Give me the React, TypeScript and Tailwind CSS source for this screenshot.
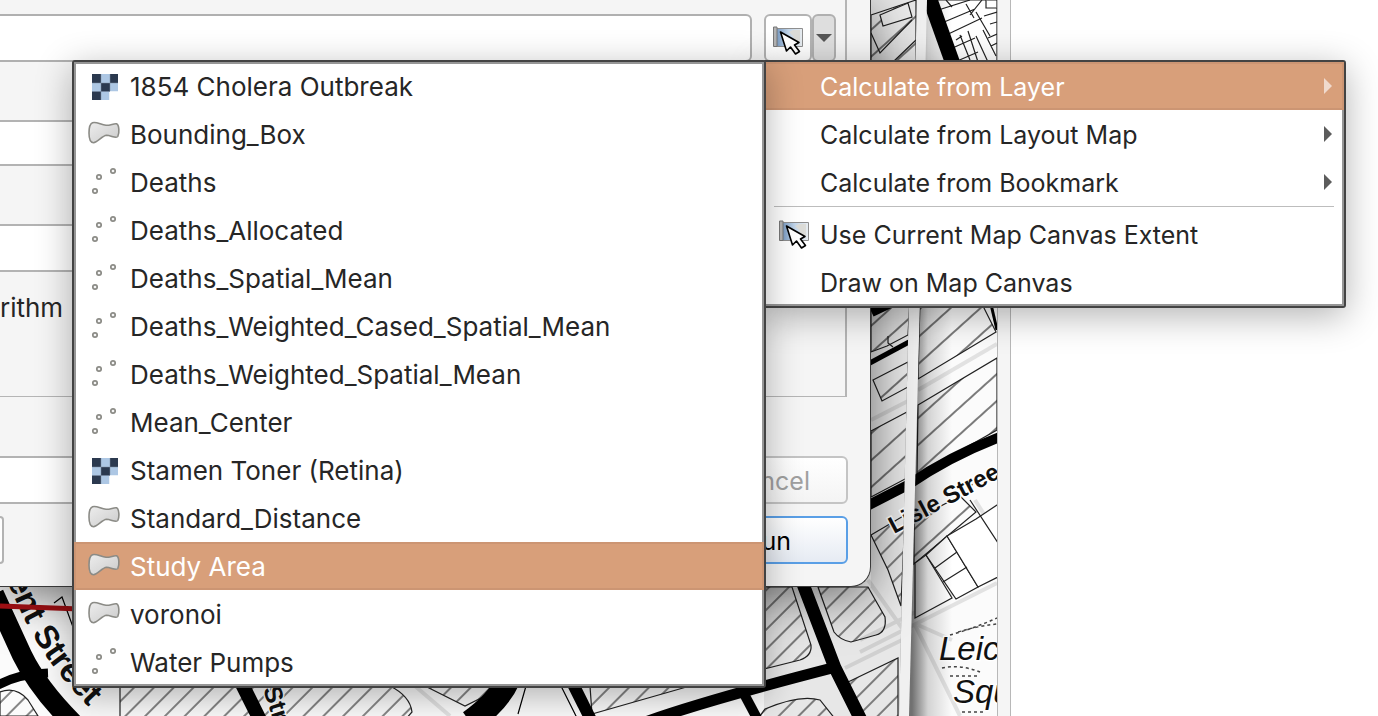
import React from "react";

type LayerKind = "raster" | "polygon" | "point";

const layers: { name: string; kind: LayerKind; active?: boolean }[] = [
  { name: "1854 Cholera Outbreak", kind: "raster" },
  { name: "Bounding_Box", kind: "polygon" },
  { name: "Deaths", kind: "point" },
  { name: "Deaths_Allocated", kind: "point" },
  { name: "Deaths_Spatial_Mean", kind: "point" },
  { name: "Deaths_Weighted_Cased_Spatial_Mean", kind: "point" },
  { name: "Deaths_Weighted_Spatial_Mean", kind: "point" },
  { name: "Mean_Center", kind: "point" },
  { name: "Stamen Toner (Retina)", kind: "raster" },
  { name: "Standard_Distance", kind: "polygon" },
  { name: "Study Area", kind: "polygon", active: true },
  { name: "voronoi", kind: "polygon" },
  { name: "Water Pumps", kind: "point" },
];

function LayerIcon({ kind }: { kind: LayerKind }) {
  if (kind === "raster") {
    return (
      <svg viewBox="0 0 32 32" className="size-8 shrink-0" aria-hidden="true">
        <path d="M4 4h26v17.5h-8.5V30H4z" fill="#adc7e4" />
        <path d="M21.5 21.5H30V30h-8.5z" fill="#fff" />
        <path d="M4 4h9v9H4zM22 4h8v9h-8zM13 13h9v8.500h-9zM4 21.500h9V30H4z" fill="#2b394f" />
        <path d="M4 13h26M4 21.500h18M13 4v26M22 4v17" stroke="#7d8da3" strokeWidth=".5" />
      </svg>
    );
  }
  if (kind === "polygon") {
    return (
      <svg viewBox="0 0 32 32" className="size-8 shrink-0" aria-hidden="true">
        <defs>
          <linearGradient id="shape" x1="0" y1="0" x2="1" y2="1">
            <stop offset="0" stopColor="#ededed" />
            <stop offset="1" stopColor="#cbcbcb" />
          </linearGradient>
        </defs>
        <path
          d="M4.500 4.700C8.500 3.500 12.500 6.500 18 7.300C22.500 7.500 25.500 5.300 28.500 5.800C31.300 7 31.500 15 29.800 18.500C28.500 21 23 17.500 18.500 17.300C14 17.800 9.500 24.500 5.500 24.700C1.500 24.500 1 20 1 15C1 10 1.500 5.800 4.500 4.700Z"
          fill="url(#shape)"
          stroke="#8b8b86"
          strokeWidth="1.600"
        />
      </svg>
    );
  }
  return (
    <svg viewBox="0 0 32 32" className="size-8 shrink-0" fill="#f4f4f4" stroke="#8b8b86" strokeWidth="1.700" aria-hidden="true">
      <circle cx="7" cy="25" r="2.200" />
      <circle cx="11" cy="11" r="2.200" />
      <circle cx="25" cy="5" r="2.200" />
    </svg>
  );
}

function ExtentIcon() {
  return (
    <svg viewBox="0 0 32 32" className="size-8 shrink-0" aria-hidden="true">
      <defs>
        <linearGradient id="sheet" x1="0" y1="0" x2="1" y2="0">
          <stop offset="0" stopColor="#6f93bd" />
          <stop offset=".5" stopColor="#c3d6ea" />
          <stop offset="1" stopColor="#e9edf0" />
        </linearGradient>
      </defs>
      <path d="M3 4.500H30.500V22.500H3z" fill="url(#sheet)" stroke="#8e8e8e" />
      <path d="M17 8l4-2h7v12l-5-1-2-5z" fill="#dcdcd8" />
      <path d="M1.500 3h3.500v19.500H1.500z" fill="#b5b5b5" stroke="#777" />
      <path
        d="M8.500 8L14.500 27L18.500 23L23.500 30L27.500 27.500L22.500 21L27 18.500Z"
        fill="#fff"
        stroke="#000"
        strokeWidth="1.600"
        strokeLinejoin="round"
      />
    </svg>
  );
}

function Arrow() {
  return (
    <svg viewBox="0 0 8 16" className="h-4 w-2 shrink-0 fill-current" aria-hidden="true">
      <path d="M0 0L8 8L0 16Z" />
    </svg>
  );
}

function CommandItem({
  label,
  icon,
  arrow,
  active,
}: {
  label: string;
  icon?: React.ReactNode;
  arrow?: boolean;
  active?: boolean;
}) {
  return (
    <li role="none">
      <button
        type="button"
        role="menuitem"
        aria-haspopup={arrow ? "menu" : undefined}
        className={
          active
            ? "flex h-12 w-full items-center gap-2.5 bg-[#d89f7a] pl-[14px] pr-3 text-left text-white shadow-[inset_0_0_0_2px_#cc9573]"
            : "flex h-12 w-full items-center gap-2.5 pl-[14px] pr-3 text-left"
        }
      >
        <span className="flex w-8 shrink-0">{icon}</span>
        <span className="pt-0.5">{label}</span>
        {arrow && (
          <span className={active ? "ml-auto text-[#f0dacd]" : "ml-auto text-[#5c5c5c]"}>
            <Arrow />
          </span>
        )}
      </button>
    </li>
  );
}

function StreetMap() {
  return (
    <svg
      viewBox="0 0 997 716"
      preserveAspectRatio="xMinYMin slice"
      className="absolute inset-0 size-full"
      role="img"
      aria-label="Street map"
    >
      <defs>
        <pattern id="hatch" width="14" height="14" patternUnits="userSpaceOnUse" patternTransform="rotate(-45)">
          <path d="M0 7H14" stroke="#111" strokeWidth="1" />
        </pattern>
        <pattern id="wide" width="20" height="20" patternUnits="userSpaceOnUse" patternTransform="rotate(-42)">
          <path d="M0 5H20" stroke="#111" strokeWidth="1.100" />
        </pattern>
        <linearGradient id="fade" x1="912" y1="0" x2="952" y2="0" gradientUnits="userSpaceOnUse">
          <stop offset="0" stopColor="#000" stopOpacity=".55" />
          <stop offset=".4" stopColor="#000" stopOpacity=".16" />
          <stop offset="1" stopColor="#000" stopOpacity="0" />
        </linearGradient>
        <path id="regent" d="M7 580Q26 628 50 662Q72 692 112 730" />
      </defs>
      <rect width="997" height="716" fill="#fbfbfb" />

      <g stroke="#e2e2e2" strokeWidth="4" fill="none">
        <path d="M918 390L997 344M871 420L908 401M860 640L997 571M860 652L997 583M868 580L902 628M915 625L960 716M975 500L997 535" />
        <path d="M845 668L902 640M918 625L952 640M415 686L450 716" />
      </g>

      <g fill="url(#hatch)" stroke="#222" strokeWidth="1.200">
        <path d="M764 587H792L811 645Q812 656 800 660L764 669Z" />
        <path d="M818 587H868L885 617Q887 632 876 635L851 642Q840 640 834 632Z" />
        <path d="M846 683L898 658V730H870Z" />
        <path d="M871 535L905 515L901 606L888 570Z" />
        <path d="M0 716L0 692Q16 686 28 700L38 716Z" />
        <path d="M120 686H390Q410 696 412 712L405 720H120Z" />
        <path d="M590 686H690L592 714Z" />
        <path d="M757 720L765 709Q800 694 820 700L836 720Z" />
        <path d="M425 686H505L465 706Z" />
      </g>
      <g fill="url(#wide)" stroke="#222" strokeWidth="1.200">
        <path d="M871 300H910L908 335L887 346L871 352Z" />
        <path d="M871 431L907 412V478L871 497Z" />
        <path d="M873 380L908 362V387L882 401Z" />
        <path d="M920 300H980L996 332L918 379Z" />
        <path d="M918 405L997 358V430L917 475Z" />
        <path d="M871 15L916 0V62H871Z" />
        <path d="M914 520L960 496L976 512L914 564Z" />
      </g>
      <g fill="#fff" stroke="#222" strokeWidth="1.200">
        <path d="M880 15L908 3L912 17L883 26Z" />
        <path d="M915 563L926 555L952 598L915 618Z" />
        <path d="M926 555L947 536L978 587L956 599Z" />
        <path d="M947 536L976 519L1000 503V576L978 587Z" />
        <path d="M935 568L957 552M943 582L967 567M970 500L1000 546" />
        <path d="M871 33L880 53L912 20M893 62L916 40" fill="none" />
        <path d="M888 336V343L893 347" fill="none" />
      </g>

      <g stroke="#222" strokeWidth="1.200" fill="#fff">
        <path d="M927 0H997V62H956Z" />
        <path d="M932 12L970 0M937 25L975 9M942 37L982 18M948 50L975 38M955 62L978 52M946 0L952 7M966 4L974 18M982 0L970 15M986 0V8H997M976 12L990 36M984 16L997 12M990 24L997 22M960 35L970 60M968 31L978 62M976 36L988 62M983 30L996 56M988 38L997 34M991 46L997 43M956 40L962 36" />
      </g>

      <g fill="none" stroke="#000">
        <path d="M928 -6L953 64" strokeWidth="15" />
        <path d="M871 311L890 302" strokeWidth="12" />
        <path d="M868 364L909 342" strokeWidth="5" />
        <path d="M865 507L908 485Q950 456 1000 437" strokeWidth="10" />
        <path d="M-6 594L22 655Q38 688 74 724" strokeWidth="20" />
        <path d="M-2 685Q18 674 48 673" strokeWidth="9" />
        <path d="M240 680L262 724" strokeWidth="14" />
        <path d="M508 680Q498 702 470 722" strokeWidth="24" />
        <path d="M571 680L592 722" strokeWidth="12" />
        <path d="M640 724Q700 702 836 667" strokeWidth="11" />
        <path d="M803 584L835 668L862 722" strokeWidth="13" />
        <path d="M743 692L759 722" strokeWidth="10" />
        <path d="M526 686L518 714M561 686L577 718M54 603L62 597L73 627" strokeWidth="1.200" />
        <path d="M990 300L997 330" strokeWidth="3" />
      </g>

      <g fill="none" stroke="#444" strokeWidth="1.500" strokeDasharray="3 3">
        <path d="M950 635Q975 628 997 618M958 632Q978 626 997 624M942 668Q960 664 980 672M950 676H977M962 712H985M970 486L996 470" />
      </g>

      <path d="M764 587H871V0H917L909 300L899 716H764Z" fill="#000" fillOpacity=".08" />

      <g fontFamily="'Liberation Sans', Arial, sans-serif" fill="#111">
        <g stroke="#fff" strokeWidth="3" paintOrder="stroke">
          <text fontSize="33" fontWeight="700">
            <textPath href="#regent">ent Street</textPath>
          </text>
          <text fontSize="24" fontWeight="700" transform="translate(894 534) rotate(-28)">
            Lisle Stree
          </text>
          <text fontSize="25" fontWeight="700" transform="translate(263 689) rotate(72)">
            Str
          </text>
          <text x="939" y="660" fontSize="33" fontStyle="italic">
            Leic
          </text>
          <text x="953" y="703" fontSize="33" fontStyle="italic">
            Squ
          </text>
        </g>
      </g>

      <path d="M917 0L909 300L899 716H997V0Z" fill="url(#fade)" />
      <path d="M917 0H927L920 300L909 716H899L909 300Z" fill="#f0f0f0" />
      <path d="M0 606L80 609" stroke="#b01116" strokeWidth="5" />
    </svg>
  );
}

function AlgorithmDialog() {
  return (
    <section
      role="dialog"
      aria-label="Processing algorithm"
      className="absolute left-0 top-0 flex w-[871px] flex-col rounded-br-[20px] border-b border-r border-[#3a3a3a] bg-[#f5f5f5] pb-[22px] shadow-[0_10px_50px_rgba(0,0,0,0.55)]"
    >
      <div className="mr-[23px] flex h-[397px] flex-col border-b border-r-2 border-[#b5b5b5] pt-[14px]">
        <div className="flex gap-3">
          <input
            aria-label="Extent"
            className="h-12 w-[752px] shrink-0 rounded-r-md border-2 border-l-0 border-[#b0b0b0] bg-white px-2"
          />
          <div className="flex">
            <button
              type="button"
              aria-label="Set extent"
              className="flex h-12 w-12 items-center justify-center rounded-md border-2 border-[#b3b3b3] bg-white pt-1"
            >
              <ExtentIcon />
            </button>
            <button
              type="button"
              aria-label="Extent options"
              className="flex h-12 w-6 items-center justify-center rounded-md border-2 border-[#b0b0b0] bg-[#dedede]"
            >
              <svg viewBox="0 0 16 8" className="h-2 w-4 shrink-0" aria-hidden="true">
                <path d="M0 0H16L8 8Z" fill="#555" />
              </svg>
            </button>
          </div>
        </div>
        <div className="flex flex-col gap-[58px] pr-3 pt-[58px]">
          <input aria-label="Width" className="block h-[46px] w-full border-2 border-l-0 border-[#b3b3b3] bg-white px-2" />
          <input aria-label="Height" className="block h-12 w-full border-2 border-l-0 border-[#b3b3b3] bg-white px-2" />
        </div>
        <p className="pt-[18px] text-[26px] leading-9">rithm</p>
      </div>
      <div className="flex justify-between pr-[22px] pt-[59px]">
        <div className="flex grow flex-col gap-3 pr-4">
          <div role="progressbar" aria-label="Progress" className="h-12 border-2 border-l-0 border-[#b3b3b3] bg-white" />
          <button type="button" aria-label="Help" className="h-12 w-1 rounded-r-md border-2 border-l-0 border-[#b3b3b3] bg-white" />
        </div>
        <div className="flex w-40 flex-col gap-3">
          <button
            type="button"
            disabled
            className="h-12 rounded-md border-2 border-[#c4c4c4] bg-linear-to-b from-white to-[#f4f4f4] pr-9 pt-0.5 text-right text-[#a0a0a0]"
          >
            Cancel
          </button>
          <button
            type="button"
            className="h-12 rounded-md border-2 border-[#5a9fe6] bg-linear-to-b from-white to-[#e6ebf3] pr-[55px] pt-0.5 text-right text-black"
          >
            Run
          </button>
        </div>
      </div>
    </section>
  );
}

export default function App() {
  return (
    <main className="relative flex min-h-screen overflow-hidden bg-white font-['Inter','Noto_Sans',sans-serif] text-[25px] leading-8 text-[#262626]">
      <div className="relative w-[997px] shrink-0 overflow-hidden">
        <StreetMap />
      </div>
      <div className="w-[14px] shrink-0 border-x border-[#b8b8b8] bg-[#f5f5f5]" />
      <div className="grow bg-white" />

      <AlgorithmDialog />

      <ul
        role="menu"
        aria-label="Extent source"
        className="absolute left-[762px] top-[60px] w-[584px] rounded-[3px] border-2 border-[#434343] bg-white shadow-[inset_0_0_0_2px_#969696,0_8px_36px_rgba(0,0,0,0.3)]"
      >
        <CommandItem label="Calculate from Layer" arrow active />
        <CommandItem label="Calculate from Layout Map" arrow />
        <CommandItem label="Calculate from Bookmark" arrow />
        <li role="separator" className="mx-2.5 mb-[3px] h-px bg-[#bdbdbd]" />
        <CommandItem label="Use Current Map Canvas Extent" icon={<ExtentIcon />} />
        <CommandItem label="Draw on Map Canvas" />
      </ul>

      <ul
        role="menu"
        aria-label="Layers"
        className="absolute left-[72px] top-[60px] w-[694px] rounded-[3px] border-2 border-[#434343] bg-white text-[26px] shadow-[inset_0_0_0_2px_#969696,0_8px_36px_rgba(0,0,0,0.3)]"
      >
        {layers.map((layer) => (
          <li key={layer.name} role="none">
            <button
              type="button"
              role="menuitem"
              className={
                layer.active
                  ? "flex h-12 w-full items-center gap-2.5 bg-[#d89f7a] px-[14px] text-left text-white shadow-[inset_0_0_0_2px_#cc9573]"
                  : "flex h-12 w-full items-center gap-2.5 px-[14px] text-left"
              }
            >
              <LayerIcon kind={layer.kind} />
              <span className="pt-0.5">{layer.name}</span>
            </button>
          </li>
        ))}
      </ul>
    </main>
  );
}
